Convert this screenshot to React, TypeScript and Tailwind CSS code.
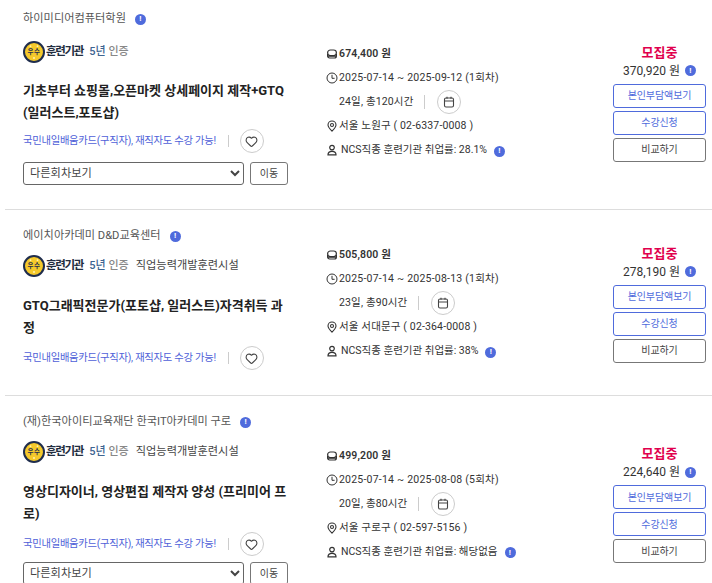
import { Heart } from "lucide-react";
import type { ReactNode } from "react";

type Course = {
  provider: string;
  category?: string;
  title: string;
  price: string;
  period: string;
  duration: string;
  address: string;
  rate: string;
  selfPay: string;
  rounds: boolean;
};

const courses: Course[] = [
  {
    provider: "하이미디어컴퓨터학원",
    title: "기초부터 쇼핑몰,오픈마켓 상세페이지 제작+GTQ (일러스트,포토샵)",
    price: "674,400 원",
    period: "2025-07-14 ~ 2025-09-12 (1회차)",
    duration: "24일, 총120시간",
    address: "서울 노원구 ( 02-6337-0008 )",
    rate: "28.1%",
    selfPay: "370,920 원",
    rounds: true,
  },
  {
    provider: "에이치아카데미 D&D교육센터",
    category: "직업능력개발훈련시설",
    title: "GTQ그래픽전문가(포토샵, 일러스트)자격취득 과정",
    price: "505,800 원",
    period: "2025-07-14 ~ 2025-08-13 (1회차)",
    duration: "23일, 총90시간",
    address: "서울 서대문구 ( 02-364-0008 )",
    rate: "38%",
    selfPay: "278,190 원",
    rounds: false,
  },
  {
    provider: "(재)한국아이티교육재단 한국IT아카데미 구로",
    category: "직업능력개발훈련시설",
    title: "영상디자이너, 영상편집 제작자 양성 (프리미어 프로)",
    price: "499,200 원",
    period: "2025-07-14 ~ 2025-08-08 (5회차)",
    duration: "20일, 총80시간",
    address: "서울 구로구 ( 02-597-5156 )",
    rate: "해당없음",
    selfPay: "224,640 원",
    rounds: true,
  },
];

function InfoDot() {
  return (
    <span className="inline-flex size-[11px] shrink-0 items-center justify-center rounded-full bg-[#4f6bdc] text-[8px] leading-none font-bold text-white">
      !
    </span>
  );
}

function Medal() {
  return (
    <svg width="22" height="22" viewBox="0 0 22 22" aria-hidden="true">
      <circle cx="11" cy="11" r="10" fill="#f5c92b" stroke="#1f2d4d" strokeWidth="2" />
      <text x="11" y="13.4" textAnchor="middle" fontSize="6.5" fontWeight="700" fill="#1f2d4d" letterSpacing="0.6">
        우수
      </text>
      <circle cx="7.5" cy="5.2" r="0.9" fill="#fff3b0" />
      <circle cx="14.5" cy="5.2" r="0.9" fill="#fff3b0" />
      <circle cx="11" cy="17" r="1" fill="#fff3b0" />
    </svg>
  );
}

function CoinIcon() {
  return (
    <svg width="12" height="12" viewBox="0 0 12 12" fill="none" stroke="#333" strokeWidth="1.2" aria-hidden="true">
      <rect x="1.6" y="2" width="8.8" height="5.6" rx="2.8" />
      <path d="M1.6 6v2a2 2 0 0 0 2 2h4.8a2 2 0 0 0 2-2V6M2 8.2h8" />
    </svg>
  );
}

function ClockIcon() {
  return (
    <svg width="12" height="12" viewBox="0 0 12 12" fill="none" stroke="#333" strokeWidth="1" aria-hidden="true">
      <circle cx="6" cy="6" r="5" />
      <path d="M6 2.8V6.3h2.6" />
    </svg>
  );
}

function PinIcon() {
  return (
    <svg width="12" height="12" viewBox="0 0 12 12" fill="none" stroke="#333" strokeWidth="1.1" aria-hidden="true">
      <path d="M6 11.2C3.8 9 2 7.2 2 5a4 4 0 0 1 8 0c0 2.2-1.8 4-4 6.2z" />
      <circle cx="6" cy="5" r="1.5" />
    </svg>
  );
}

function PersonIcon() {
  return (
    <svg width="12" height="12" viewBox="0 0 12 12" fill="none" stroke="#333" strokeWidth="1.2" aria-hidden="true">
      <circle cx="6" cy="3.6" r="2.3" />
      <path d="M2 10.8h8c0-2.2-1.6-3.4-4-3.4s-4 1.2-4 3.4z" />
    </svg>
  );
}

function CalendarIcon() {
  return (
    <svg width="12" height="12" viewBox="0 0 12 12" fill="none" stroke="#444" strokeWidth="1.1" aria-hidden="true">
      <rect x="1.5" y="2" width="9" height="9" rx="1.5" />
      <path d="M1.5 5h9M4 .8v2M8 .8v2" />
    </svg>
  );
}

function InfoLine({ icon, children }: { icon: ReactNode; children: ReactNode }) {
  return (
    <div className="flex h-[24px] items-center gap-px text-[10.5px] tracking-[0.15px] text-[#333]">
      <span className="flex w-[12px] justify-center">{icon}</span>
      {children}
    </div>
  );
}

function CourseRow({ course, last }: { course: Course; last: boolean }) {
  return (
    <div
      className={`ml-[5px] flex pt-[16px] pr-[6px] pl-[18px] ${last ? "" : "border-b border-[#ddd]"} ${
        course.category ? "pb-[25px]" : "pb-[24px]"
      }`}
    >
      <div className="w-[303px] shrink-0">
        <div className="flex h-[20px] items-center gap-[9px] text-[11.2px] text-[#555]">
          {course.provider}
          <InfoDot />
        </div>
        <div className={`flex h-[28px] items-center ${course.category ? "mt-[6px]" : "mt-[9px]"}`}>
          <Medal />
          <span className="ml-px text-[11.5px] font-bold tracking-[-1.3px] text-[#222d40]">훈련기관</span>
          <span className="ml-[6px] text-[11px] font-medium text-[#3d6491]">5년</span>
          <span className="ml-[3px] text-[11px] font-medium text-[#888]">인증</span>
          {course.category && <span className="ml-[7px] text-[11.2px] text-[#444]">{course.category}</span>}
        </div>
        <h2
          className={`w-[265px] text-[13px] leading-[22px] font-bold text-[#222] ${
            course.category ? "mt-[15px]" : "mt-[14px]"
          }`}
        >
          {course.title}
        </h2>
        <div className={`flex h-[24px] items-center ${course.category ? "mt-[7px]" : "mt-[5px]"}`}>
          <span className="text-[10.3px] tracking-[-0.25px] text-[#4f5fd8]">
            국민내일배움카드(구직자), 재직자도 수강 가능!
          </span>
          <span className="ml-[12px] h-[12px] w-px bg-[#ccc]" />
          <button
            type="button"
            className="ml-[11px] flex size-[24px] items-center justify-center rounded-full border border-[#ccc]"
          >
            <Heart size={13} color="#444" />
          </button>
        </div>
        {course.rounds && (
          <div className={`flex gap-[6px] ${course.category ? "mt-[6px]" : "mt-[9px]"}`}>
            <select className="h-[23px] w-[221px] rounded-[3px] border border-[#666] bg-white pl-[2px] text-[11.2px] text-[#444]">
              <option>다른회차보기</option>
            </select>
            <button
              type="button"
              className="h-[23px] w-[38px] rounded-[3px] border border-[#777] text-[10px] text-[#444]"
            >
              이동
            </button>
          </div>
        )}
      </div>

      <div className="flex w-[287px] shrink-0 flex-col self-center pt-[10px]">
        <InfoLine icon={<CoinIcon />}>
          <span className="font-semibold">{course.price}</span>
        </InfoLine>
        <InfoLine icon={<ClockIcon />}>
          <span className="tracking-[0.22px]">{course.period}</span>
        </InfoLine>
        <div className="flex h-[24px] items-center text-[10.5px] tracking-[0.15px] text-[#333]">
          <span className="ml-[13px]">{course.duration}</span>
          <span className="ml-[11px] h-[14px] w-px bg-[#ccc]" />
          <span className="ml-[12px] flex size-[24px] items-center justify-center rounded-full border border-[#ccc]">
            <CalendarIcon />
          </span>
        </div>
        <InfoLine icon={<PinIcon />}>{course.address}</InfoLine>
        <InfoLine icon={<PersonIcon />}>
          <span className="ml-[2px] tracking-normal">NCS직종 훈련기관 취업률: {course.rate}</span>
          <span className="ml-[6px]">
            <InfoDot />
          </span>
        </InfoLine>
      </div>

      <div className="flex w-[93px] shrink-0 flex-col self-center pt-[10px]">
        <div className="h-[18px] text-center text-[13px] leading-[20px] font-bold text-[#e0004d]">모집중</div>
        <div className="flex h-[20px] items-center justify-center gap-[5px] text-[12px] text-[#333]">
          {course.selfPay}
          <InfoDot />
        </div>
        <div className="mt-[3px] flex flex-col gap-[3px] text-[10px] tracking-[-0.1px]">
          <button type="button" className="h-[24px] rounded-[3px] border border-[#4f6bdc] text-[#4f6bdc]">
            본인부담액보기
          </button>
          <button type="button" className="h-[24px] rounded-[3px] border border-[#4f6bdc] text-[#4f6bdc]">
            수강신청
          </button>
          <button type="button" className="h-[24px] rounded-[3px] border border-[#777] text-[#444]">
            비교하기
          </button>
        </div>
      </div>
    </div>
  );
}

export default function App() {
  return (
    <div className="h-[583px] w-[712px] overflow-hidden bg-white font-['Roboto','Noto_Sans_CJK_KR',sans-serif]">
      <div className="-mt-[7px]">
        {courses.map((c, i) => (
          <CourseRow key={c.provider} course={c} last={i === courses.length - 1} />
        ))}
      </div>
    </div>
  );
}
